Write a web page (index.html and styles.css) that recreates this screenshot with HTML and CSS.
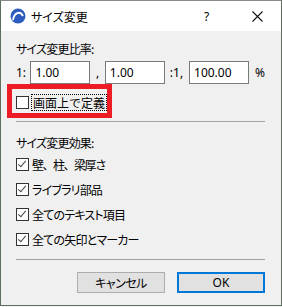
FILE: index.html
```html
<!DOCTYPE html>
<html lang="ja">
<head>
    <meta charset="UTF-8">
    <title>サイズ変更</title>
    <link rel="stylesheet" href="styles.css">
</head>
<body>
    <div class="window">
        <div class="titlebar">
            <svg class="app-icon" width="16" height="16" viewBox="0 0 16 16">
                <circle cx="8" cy="8" r="7.5" fill="#2c5cc0"/>
                <path d="M3 12 C4 5, 10 2, 13 8" stroke="#fff" stroke-width="1.8" fill="none"/>
            </svg>
            <span class="title">サイズ変更</span>
            <span class="help">?</span>
            <svg class="close" width="11" height="11" viewBox="0 0 11 11">
                <path d="M0.5 0.5 L10.5 10.5 M10.5 0.5 L0.5 10.5" stroke="#111" stroke-width="1.1"/>
            </svg>
        </div>

        <div class="content">
            <div class="group-label">サイズ変更比率:</div>
            <div class="ratio-row">
                <span class="lead">1:</span>
                <input class="num" type="text" value="1.00">
                <span class="comma">,</span>
                <input class="num" type="text" value="1.00">
                <span class="colon">:1,</span>
                <input class="num" type="text" value="100.00">
                <span class="pct">%</span>
            </div>

            <div class="highlight">
                <label class="check plain">
                    <span class="box"></span>
                    <span class="focus">画面上で定義</span>
                </label>
            </div>

            <div class="sep"></div>

            <div class="group-label second">サイズ変更効果:</div>
            <label class="check row full"><span class="box checked"></span>壁、柱、梁厚さ</label>
            <label class="check row"><span class="box checked"></span>ライブラリ部品</label>
            <label class="check row"><span class="box checked"></span>全てのテキスト項目</label>
            <label class="check row"><span class="box checked"></span>全ての矢印とマーカー</label>

            <div class="sep bottom"></div>

            <div class="buttons">
                <button class="btn">キャンセル</button>
                <button class="btn default">OK</button>
            </div>
        </div>
    </div>
</body>
</html>
```
FILE: styles.css
```css
body {
    margin: 0;
    background: #f4f6f4;
    font-family: "Noto Sans", "Noto Sans CJK JP", sans-serif;
    font-size: 12px;
    color: #000;
}
.window {
    width: 282px;
    height: 306px;
    box-sizing: border-box;
    border: 1px solid #5e6e5e;
    border-top-color: #8a8a8a;
    background: #f0f0f0;
}
.titlebar {
    height: 30px;
    background: #fff;
    display: flex;
    align-items: center;
}
.app-icon {
    margin-left: 9px;
}
.title {
    margin-left: 5px;
    font-family: "Noto Sans CJK JP", sans-serif;
    font-feature-settings: "palt";
    flex: 1;
}
.help {
    width: 10px;
    font-size: 12px;
    margin-right: 38px;
}
.close {
    margin-right: 18px;
}
.content {
    padding: 9px 16px 0 15px;
}
.group-label {
    height: 18px;
    line-height: 18px;
    font-family: "Noto Sans CJK JP", sans-serif;
    font-feature-settings: "palt";
    letter-spacing: -0.8px;
}
.group-label.second {
    margin-top: 12px;
}
.ratio-row {
    display: flex;
    align-items: center;
    height: 23px;
    margin-top: 3px;
}
.lead {
    width: 15px;
}
.num {
    width: 60px;
    height: 23px;
    box-sizing: border-box;
    border: 1px solid #7a7a7a;
    padding: 0 0 0 4px;
    margin: 0;
    font-family: "Noto Sans", sans-serif;
    font-size: 12px;
    background: #fff;
}
.comma {
    width: 15px;
    text-align: center;
}
.colon {
    width: 20px;
    padding-left: 5px;
}
.pct {
    margin-left: 6px;
}
.highlight {
    margin-left: -9px;
    width: 105px;
    height: 34px;
    box-sizing: border-box;
    border: 5px solid #ed1c24;
    padding: 5px 0 0 4px;
}
.check {
    display: flex;
    align-items: center;
    font-family: "Noto Sans CJK JP", sans-serif;
    font-feature-settings: "palt";
    letter-spacing: -0.8px;
}
.check.full {
    font-feature-settings: normal;
    letter-spacing: -1.5px;
}
.check.plain {
    font-feature-settings: normal;
    letter-spacing: 0;
}
.check.row {
    height: 25px;
}
.highlight .check {
    height: 16px;
}
.box {
    flex: none;
    width: 13px;
    height: 13px;
    box-sizing: border-box;
    border: 1px solid #333;
    background: #fff;
    margin-right: 3px;
    position: relative;
}
.box.checked::after {
    content: "";
    position: absolute;
    left: 3px;
    top: 0px;
    width: 3px;
    height: 7px;
    border: solid #444;
    border-width: 0 1.3px 1.3px 0;
    transform: rotate(40deg);
}
.focus {
    outline: 1px dotted #000;
    padding: 0 1px;
    line-height: 15px;
}
.sep {
    height: 1px;
    background: #a0a0a0;
    margin-top: 3px;
}
.sep.bottom {
    margin-top: 7px;
}
.buttons {
    display: flex;
    justify-content: flex-end;
    gap: 12px;
    margin-top: 12px;
}
.btn {
    width: 88px;
    height: 21px;
    box-sizing: border-box;
    border: 1px solid #adadad;
    background: #e1e1e1;
    font-family: "Noto Sans CJK JP", sans-serif;
    font-feature-settings: "palt";
    letter-spacing: -0.5px;
    font-size: 12px;
    padding: 0;
}
.btn.default {
    border: 2px solid #0078d7;
    font-family: "Noto Sans", sans-serif;
    letter-spacing: 0;
}
```
